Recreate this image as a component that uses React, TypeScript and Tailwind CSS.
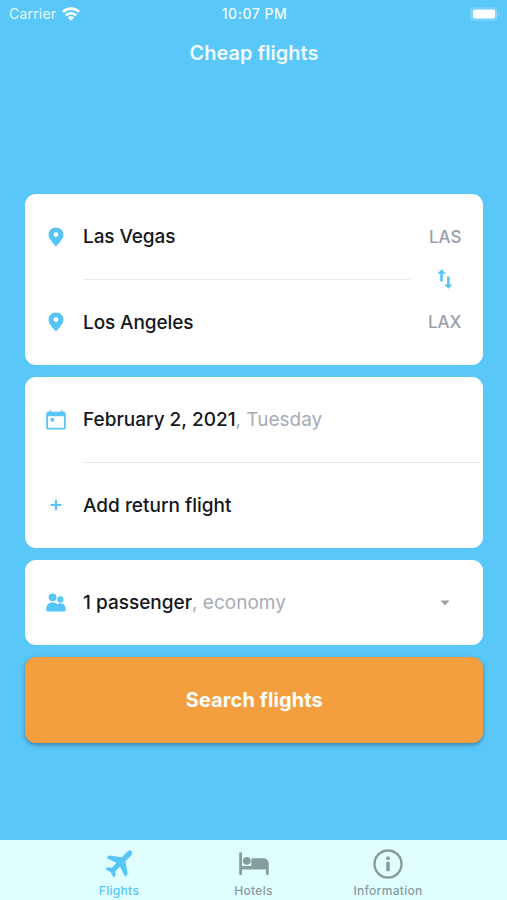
import React from 'react'
import { clsx } from 'clsx'

type IconProps = { className?: string }

const WifiIcon = () => (
  <svg width="18" height="14" viewBox="0 0 18 14" fill="none">
    <g stroke="currentColor" strokeWidth="2.7">
      <path d="M0.9 4.9C5.3 0.5 12.7 0.5 17.1 4.9" />
      <path d="M3.8 8.4C6.7 5.5 11.3 5.5 14.2 8.4" />
    </g>
    <path
      d="M9 13.8L5.7 10.6C7.5 8.9 10.5 8.9 12.3 10.6L9 13.8Z"
      fill="currentColor"
    />
  </svg>
)

const BatteryIcon = () => (
  <svg width="30" height="14" viewBox="0 0 30 14" fill="none">
    <rect x="1" y="1" width="25.4" height="12" rx="3.2" stroke="#92dafc" strokeWidth="1.2" />
    <rect x="2.8" y="2.4" width="22.4" height="9.2" rx="1.8" fill="#fff" />
    <path d="M28 5C29.6 5.5 29.6 8.5 28 9V5Z" fill="#92dafc" />
  </svg>
)

const PinIcon = () => (
  <svg width="16" height="20" viewBox="0 0 16 20" fill="currentColor">
    <path
      fillRule="evenodd"
      d="M8 0.4C3.7 0.4 0.5 3.5 0.5 7.6C0.5 12 4.2 15.4 8 19.6C11.8 15.4 15.5 12 15.5 7.6C15.5 3.5 12.3 0.4 8 0.4ZM8 10A2.4 2.4 0 1 1 8 5.2A2.4 2.4 0 0 1 8 10Z"
    />
  </svg>
)

const SwapIcon = () => (
  <svg width="16" height="20" viewBox="0 0 16 20" fill="currentColor">
    <path d="M4.6 0.2L9 4.8H5.8V12.4H3.2V4.8H0.4L4.6 0.2Z" />
    <path d="M11.4 19.8L7.2 15.4H10.1V7.6H12.7V15.4H15.4L11.4 19.8Z" />
  </svg>
)

const CalendarIcon = () => (
  <svg width="20" height="20" viewBox="0 0 20 20" fill="currentColor">
    <path
      fillRule="evenodd"
      d="M3.3 0.4H5.3V1.7H14.7V0.4H16.7V1.7H17.6C18.9 1.7 19.8 2.5 19.8 3.8V17.4C19.8 18.7 18.9 19.6 17.6 19.6H2.4C1.1 19.6 0.2 18.7 0.2 17.4V3.8C0.2 2.5 1.1 1.7 2.4 1.7H3.3V0.4ZM2 6.2V17.1C2 17.5 2.3 17.8 2.7 17.8H17.3C17.7 17.8 18 17.5 18 17.1V6.2H2Z"
    />
    <circle cx="6.3" cy="9.8" r="2" />
  </svg>
)

const PlusIcon = () => (
  <svg width="12" height="12" viewBox="0 0 12 12" fill="none">
    <path d="M6 0.7V11.3M0.7 6H11.3" stroke="currentColor" strokeWidth="2.2" />
  </svg>
)

const PeopleIcon = () => (
  <svg width="20" height="19" viewBox="0 0 20 19" fill="currentColor">
    <circle cx="6.6" cy="4.3" r="3.9" />
    <circle cx="14.4" cy="6.4" r="3.1" />
    <path d="M0.2 16.6C0.2 12 2.7 9.2 6.6 9.2C8.8 9.2 10.4 10.2 11.4 11.2C12.2 10.6 13.2 10.3 14.4 10.3C17.8 10.3 19.8 13.1 19.8 16.6C19.8 17.8 19.1 18.5 18 18.5H2C0.9 18.5 0.2 17.8 0.2 16.6Z" />
  </svg>
)

const PlaneIcon = ({ className }: IconProps) => (
  <svg className={className} width="28" height="28" viewBox="0 0 28 28" fill="currentColor">
    <path d="M26.5 1.1C27.7 2.3 27.3 4.2 25.9 5.7L20.6 11.1L22.6 24.3L20.1 26.7L15 16.6L10.3 21.2L10.6 25.5L8.6 27.5L5.7 22.2L0.5 19.3L2.5 17.3L6.8 17.7L11.3 13L1.4 7.8L3.8 5.4L16.9 7.3L22 1.9C23.5 0.4 25.4 0 26.5 1.1Z" />
  </svg>
)

const BedIcon = ({ className }: IconProps) => (
  <svg className={className} width="30" height="24" viewBox="0 0 30 24" fill="currentColor">
    <path d="M0.2 1C0.2 0.5 0.6 0.2 1.1 0.2H2.1C2.6 0.2 3 0.5 3 1V14H12.3V7.4C12.3 6.7 12.8 6.2 13.5 6.2H24C27.5 6.2 29.7 8.4 29.7 11.6V22.2C29.7 22.7 29.3 23 28.8 23H27.8C27.3 23 27 22.7 27 22.2V17.6H3V22.2C3 22.7 2.6 23 2.1 23H1.1C0.6 23 0.2 22.7 0.2 22.2V1Z" />
    <circle cx="7.8" cy="8.8" r="3.9" />
  </svg>
)

const InfoIcon = ({ className }: IconProps) => (
  <svg className={className} width="30" height="30" viewBox="0 0 30 30" fill="none">
    <circle cx="15" cy="15" r="13.5" stroke="currentColor" strokeWidth="2.4" />
    <circle cx="15" cy="9.2" r="1.9" fill="currentColor" />
    <rect x="13.2" y="12.8" width="3.6" height="9.5" rx="1.2" fill="currentColor" />
  </svg>
)

const tabs = [
  { label: 'Flights', icon: PlaneIcon, active: true },
  { label: 'Hotels', icon: BedIcon, active: false },
  { label: 'Information', icon: InfoIcon, active: false },
]

const Card = ({ children }: { children: React.ReactNode }) => (
  <div className="rounded-[11px] bg-white">{children}</div>
)

const Row = ({
  icon,
  children,
}: {
  icon: React.ReactNode
  children: React.ReactNode
}) => (
  <div className="flex h-[85.5px] items-center pt-0.5 pr-[21px]">
    <div className="flex w-[58px] shrink-0 justify-center pb-[1.5px] pl-[3px] text-[#58c5f8]">
      {icon}
    </div>
    {children}
  </div>
)

const App = () => {
  return (
    <div className="flex h-[900px] w-[507px] flex-col overflow-hidden bg-[#5ac7f9] font-['Inter',sans-serif] text-[#15171c]">
      <header className="text-white">
        <div className="grid h-[27px] grid-cols-3 items-center pr-[7px] pl-[9px] text-[14px]">
          <div className="flex items-center gap-1.5 text-[#e6f9ff]">
            <span className="tracking-[0.2px]">Carrier</span>
            <span className="text-white">
              <WifiIcon />
            </span>
          </div>
          <div className="text-center text-[14px] font-medium tracking-[0.5px] whitespace-nowrap text-[#effbff]">
            10:07 PM
          </div>
          <div className="flex justify-end">
            <BatteryIcon />
          </div>
        </div>
        <h1 className="flex h-[51px] items-center justify-center pl-px text-[20px] font-semibold text-[#effbff]">
          Cheap flights
        </h1>
      </header>

      <main className="mt-[115.5px] flex flex-col gap-3 pr-[24.5px] pl-[25px] text-[19px] font-medium">
        <Card>
          <div className="relative">
            <Row icon={<PinIcon />}>
              <span className="tracking-[-0.1px]">Las Vegas</span>
              <span className="ml-auto text-[17px] text-[#9a9eab]">LAS</span>
            </Row>
            <Row icon={<PinIcon />}>
              <span className="tracking-[-0.1px]">Los Angeles</span>
              <span className="ml-auto text-[17px] text-[#9a9eab]">LAX</span>
            </Row>
            <div className="absolute top-[85px] right-[73px] left-[59px] h-px bg-[#e9e9eb]" />
            <button className="absolute top-[75px] right-[30px] text-[#58c5f8]">
              <SwapIcon />
            </button>
          </div>
        </Card>

        <Card>
          <Row icon={<CalendarIcon />}>
            <span>February 2, 2021</span>
            <span className="font-normal text-[#a7abb7]">, Tuesday</span>
          </Row>
          <div className="mr-[3px] -mb-px ml-[59px] h-px bg-[#e9e9eb]" />
          <Row icon={<PlusIcon />}>
            <span>Add return flight</span>
          </Row>
        </Card>

        <Card>
          <Row icon={<PeopleIcon />}>
            <span>1 passenger</span>
            <span className="font-normal text-[#a7abb7]">, economy</span>
            <svg
              className="mr-[12px] ml-auto"
              width="10"
              height="6"
              viewBox="0 0 10 6"
              fill="#9b9faa"
            >
              <path d="M0.5 0.4H9.5L5 5.4Z" />
            </svg>
          </Row>
        </Card>

        <button className="flex h-[85.5px] items-center justify-center rounded-[11px] bg-[#f39f3f] pt-px pl-px text-[20px] font-bold tracking-[0.1px] text-white shadow-[0_2px_4px_rgba(40,60,90,0.5)]">
          Search flights
        </button>
      </main>

      <nav className="mt-auto flex h-[60px] justify-center bg-[#e1feff]">
        {tabs.map(({ label, icon: Icon, active }) => (
          <div
            key={label}
            className={clsx(
              'flex w-[134.5px] flex-col items-center text-[12px] font-medium',
              active ? 'text-[#58c5f8]' : 'text-[#879c9f]'
            )}
          >
            <div className="flex h-[43px] items-center pt-1">
              <Icon />
            </div>
            <span className="leading-4 tracking-[0.3px]">{label}</span>
          </div>
        ))}
      </nav>
    </div>
  )
}

export default App
